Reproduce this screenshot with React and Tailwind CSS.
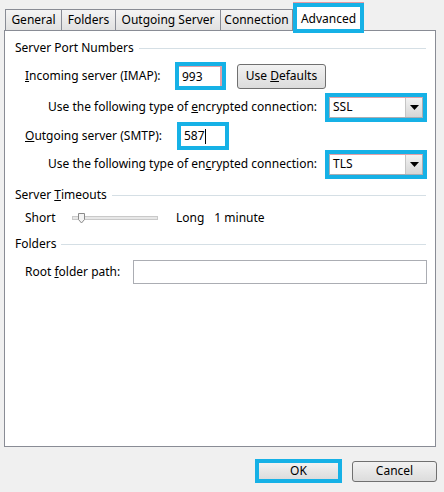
import React from "react";

const cyan = "border-[#16b1e6]";

function Heading({ children, className = "" }) {
  return (
    <div className={`flex items-center h-[16px] pl-[10px] pr-[9px] ${className}`}>
      <span className="whitespace-nowrap">{children}</span>
      <div className="flex-1 h-px bg-[#d5dfe5] ml-[5px]" />
    </div>
  );
}

function Tab({ label, w, last }) {
  return (
    <div
      className={`h-[21px] ${w} flex items-center justify-center border-t border-l ${
        last ? "border-r" : ""
      } border-[#898c95] bg-gradient-to-b from-[#f4f4f4] to-[#e1e1e1] pb-[1px]`}
    >
      {label}
    </div>
  );
}

function Dropdown({ value }) {
  return (
    <div className={`ml-auto w-[102px] h-[29px] border-[4px] ${cyan}`}>
      <div className="h-full bg-white border border-[#abadb3] border-t-[#e3a0a8] flex items-center">
        <span className="pl-[3px] flex-1">{value}</span>
        <div className="w-[17px] h-full border-l border-[#c5c5c5] bg-gradient-to-b from-[#f2f2f2] to-[#d6d6d6] flex items-center justify-center">
          <svg width="9" height="5" viewBox="0 0 9 5">
            <path d="M0 0h9L4.5 5z" fill="#000" />
          </svg>
        </div>
      </div>
    </div>
  );
}

function Button({ children, className = "" }) {
  return (
    <div
      className={`flex items-center justify-center border border-[#707070] rounded-[3px] bg-gradient-to-b from-[#f2f2f2] to-[#dcdcdc] ${className}`}
    >
      <span>{children}</span>
    </div>
  );
}

export default function App() {
  return (
    <div className="w-[444px] h-[492px] bg-[#f0f0f0] text-black text-[12px] font-['Noto_Sans',sans-serif] overflow-hidden">
      <div className="flex items-end h-[30px] pl-[5px]">
        <Tab label="General" w="w-[56px]" />
        <Tab label="Folders" w="w-[54px]" />
        <Tab label="Outgoing Server" w="w-[105px]" />
        <Tab label="Connection" w="w-[73px]" last />
        <div
          className={`relative z-10 w-[71px] h-[30px] -mb-[3px] border-[4px] ${cyan} bg-white flex items-start justify-center pt-[3px] shadow-[0_-1px_0_#e89aa2]`}
        >
          Advanced
        </div>
      </div>

      <div className="ml-[4px] w-[432px] h-[417px] border border-[#898c95] bg-white flex flex-col">
        <Heading className="mt-[9px]">Server Port Numbers</Heading>

        <div className="flex items-center h-[28px] mt-[6px] pl-[20px]">
          <span className="w-[150px]">
            <u>I</u>ncoming server (IMAP):
          </span>
          <div className={`w-[51px] h-[28px] border-[4px] ${cyan}`}>
            <div className="h-full bg-white border-r-2 border-t border-[#e3a0a8] flex items-center pl-[3px]">
              993
            </div>
          </div>
          <Button className="ml-[11px] w-[89px] h-[25px]">
            Use <u>D</u>efaults
          </Button>
        </div>

        <div className="flex items-center h-[30px] mt-[2px] pl-[43px] pr-[8px]">
          <span>
            Use the following type of <u>e</u>ncrypted connection:
          </span>
          <Dropdown value="SSL" />
        </div>

        <div className="flex items-center h-[28px] pl-[20px]">
          <span className="w-[152px]">
            <u>O</u>utgoing server (SMTP):
          </span>
          <div className={`w-[52px] h-[28px] border-[4px] ${cyan}`}>
            <div className="h-full bg-white flex items-center pl-[3px]">
              587<span className="w-px h-[15px] bg-black" />
            </div>
          </div>
        </div>

        <div className="flex items-center h-[28px] pl-[43px] pr-[8px]">
          <span>
            Use the following type of en<u>c</u>rypted connection:
          </span>
          <Dropdown value="TLS" />
        </div>

        <Heading className="mt-[9px]">
          Server <u>T</u>imeouts
        </Heading>

        <div className="flex items-center h-[20px] mt-[5px] pl-[20px]">
          <span className="w-[47px]">Short</span>
          <div className="relative w-[86px] h-[4px] border border-[#c9c9c9] bg-[#e7e7e7]">
            <svg
              className="absolute left-[5px] -top-[4px]"
              width="7"
              height="11"
              viewBox="0 0 7 11"
            >
              <path d="M0.5 0.5h6v6l-3 3.5l-3-3.5z" fill="#f4f4f4" stroke="#8a8a8a" />
            </svg>
          </div>
          <span className="ml-[18px]">Long</span>
          <span className="ml-[10px]">1 minute</span>
        </div>

        <Heading className="mt-[8px]">Folders</Heading>

        <div className="flex items-center h-[24px] mt-[8px] pl-[20px] pr-[8px]">
          <span>
            Root <u>f</u>older path:
          </span>
          <div className="ml-auto w-[294px] h-[24px] border border-[#abadb3] bg-white" />
        </div>
      </div>

      <div className="flex items-center justify-end h-[24px] mt-[12px] pr-[7px]">
        <div className={`w-[87px] h-[24px] border-[4px] ${cyan}`}>
          <div className="h-full flex items-center justify-center bg-gradient-to-b from-[#f2f2f2] to-[#dcdcdc]">
            OK
          </div>
        </div>
        <Button className="ml-[10px] w-[85px] h-[21px]">Cancel</Button>
      </div>
    </div>
  );
}
